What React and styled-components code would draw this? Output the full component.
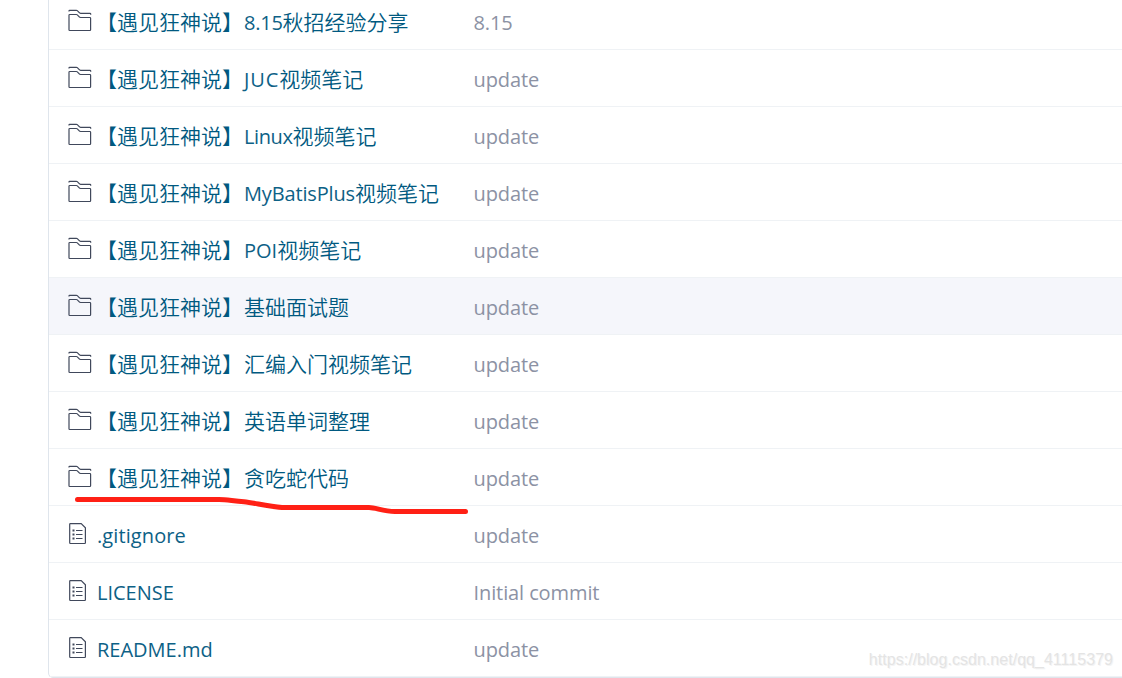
import React from "react";
import styled, { createGlobalStyle } from "styled-components";

const PREFIX = "【遇见狂神说】";

const FILES = [
  { type: "folder", latin: "8.15", name: "秋招经验分享", message: "8.15", spacing: -0.25 },
  { type: "folder", latin: "JUC", name: "视频笔记", message: "update", spacing: 0.9 },
  { type: "folder", latin: "Linux", name: "视频笔记", message: "update", spacing: -0.4 },
  { type: "folder", latin: "MyBatisPlus", name: "视频笔记", message: "update", spacing: -0.15 },
  { type: "folder", latin: "POI", name: "视频笔记", message: "update" },
  { type: "folder", name: "基础面试题", message: "update", active: true },
  { type: "folder", name: "汇编入门视频笔记", message: "update" },
  { type: "folder", name: "英语单词整理", message: "update" },
  { type: "folder", name: "贪吃蛇代码", message: "update" },
  { type: "file", latin: ".gitignore", message: "update", spacing: 0.1 },
  { type: "file", latin: "LICENSE", message: "Initial commit" },
  { type: "file", latin: "README.md", message: "update" },
];

const GlobalStyle = createGlobalStyle`
  * {
    box-sizing: border-box;
  }
  body {
    margin: 0;
    background: #fff;
    overflow: hidden;
  }
`;

const PageWrap = styled.div`
  position: relative;
  width: 1122px;
  height: 678px;
  padding-left: 48px;
  overflow: hidden;
  font-family: "Open Sans", "Noto Sans CJK SC", sans-serif;
`;

const FileList = styled.div`
  width: 1090px;
  height: 686px;
  margin-top: -8px;
  border: 1px solid #dfe5ec;
  border-radius: 5px;
`;

const Row = styled.div`
  display: flex;
  height: 57px;
  padding-left: 19px;
  border-bottom: 1px solid #eff2f5;
  background: ${(props) => (props.$active ? "#f5f6fb" : "transparent")};
`;

const NameCell = styled.div`
  display: flex;
  width: 406px;
  color: #005980;
  font-size: 21px;
  font-weight: 350;
  line-height: 59px;
  white-space: nowrap;
`;

const IconBox = styled.span`
  width: 29px;
  height: 24px;
  padding-top: 15px;

  svg {
    display: block;
  }
`;

const Prefix = styled.span`
  margin: 0 1px 0 -1px;
`;

const Latin = styled.span`
  color: #0d6186;
  font-size: 20px;
  font-weight: 400;
  letter-spacing: ${(props) => props.$spacing || 0}px;
`;

const Message = styled.div`
  margin-left: -0.5px;
  color: #8c92a4;
  font-size: 20px;
  line-height: 59px;
  letter-spacing: -0.1px;
`;

const Scribble = styled.svg`
  position: absolute;
  left: 70px;
  top: 490px;
`;

const Watermark = styled.div`
  position: absolute;
  right: 9px;
  bottom: 9px;
  color: #e4e4e4;
  font-family: "Liberation Sans", Arial, sans-serif;
  font-size: 16px;
  line-height: 18px;
  letter-spacing: 0.03px;
  text-shadow: 1px 1px 0 #f4f4f4;
`;

const FolderIcon = () => (
  <svg width="24" height="24" fill="none" stroke="#40485b" strokeWidth="1.2">
    <path d="M1 3.6V2.9q0-.6.6-.6H8.4q.5 0 .9.4l1.7 1.7q.7.9 1.6.9H22q.7 0 .7.6v.8" />
    <path d="M1 7.2q0-.7.7-.7H8.4q.5 0 .9.4l1.7 1.7q.7.9 1.6.9H21.9q.7 0 .7.7V21.8q0 .7-.7.7H1.7q-.7 0-.7-.7z" />
  </svg>
);

const FileIcon = () => (
  <svg width="20" height="24" fill="none" stroke="#40485b" strokeWidth="1.2">
    <path d="M2.4 2.6H13.2L17.4 6.8V21.8q0 .7-.7.7H2.4q-.7 0-.7-.7V3.3q0-.7.7-.7z" />
    <path d="M8 9.5h6.5M8 13.5h6.5M8 17.5h6.5" />
    <path d="M4.5 9.5h2M4.5 13.5h2M4.5 17.5h2" strokeWidth="2" />
  </svg>
);

const App = () => {
  return (
    <PageWrap>
      <GlobalStyle />
      <FileList>
        {FILES.map((file, i) => (
          <Row key={i} $active={file.active}>
            <NameCell>
              <IconBox>
                {file.type === "folder" ? <FolderIcon /> : <FileIcon />}
              </IconBox>
              {file.type === "folder" && <Prefix>{PREFIX}</Prefix>}
              {file.latin && (
                <Latin $spacing={file.spacing}>{file.latin}</Latin>
              )}
              <span>{file.name}</span>
            </NameCell>
            <Message>{file.message}</Message>
          </Row>
        ))}
      </FileList>
      <Scribble width="400" height="30" fill="none">
        <path
          d="M7.5 9.5H149C157 9.5 163 11 174 11.7C185 13 198 16.5 212 17.5H299C306 17.5 313 21.5 325 21.5H395.5"
          stroke="#ff2015"
          strokeWidth="5"
          strokeLinecap="round"
          strokeLinejoin="round"
        />
      </Scribble>
      <Watermark>https://blog.csdn.net/qq_41115379</Watermark>
    </PageWrap>
  );
};

export default App;
